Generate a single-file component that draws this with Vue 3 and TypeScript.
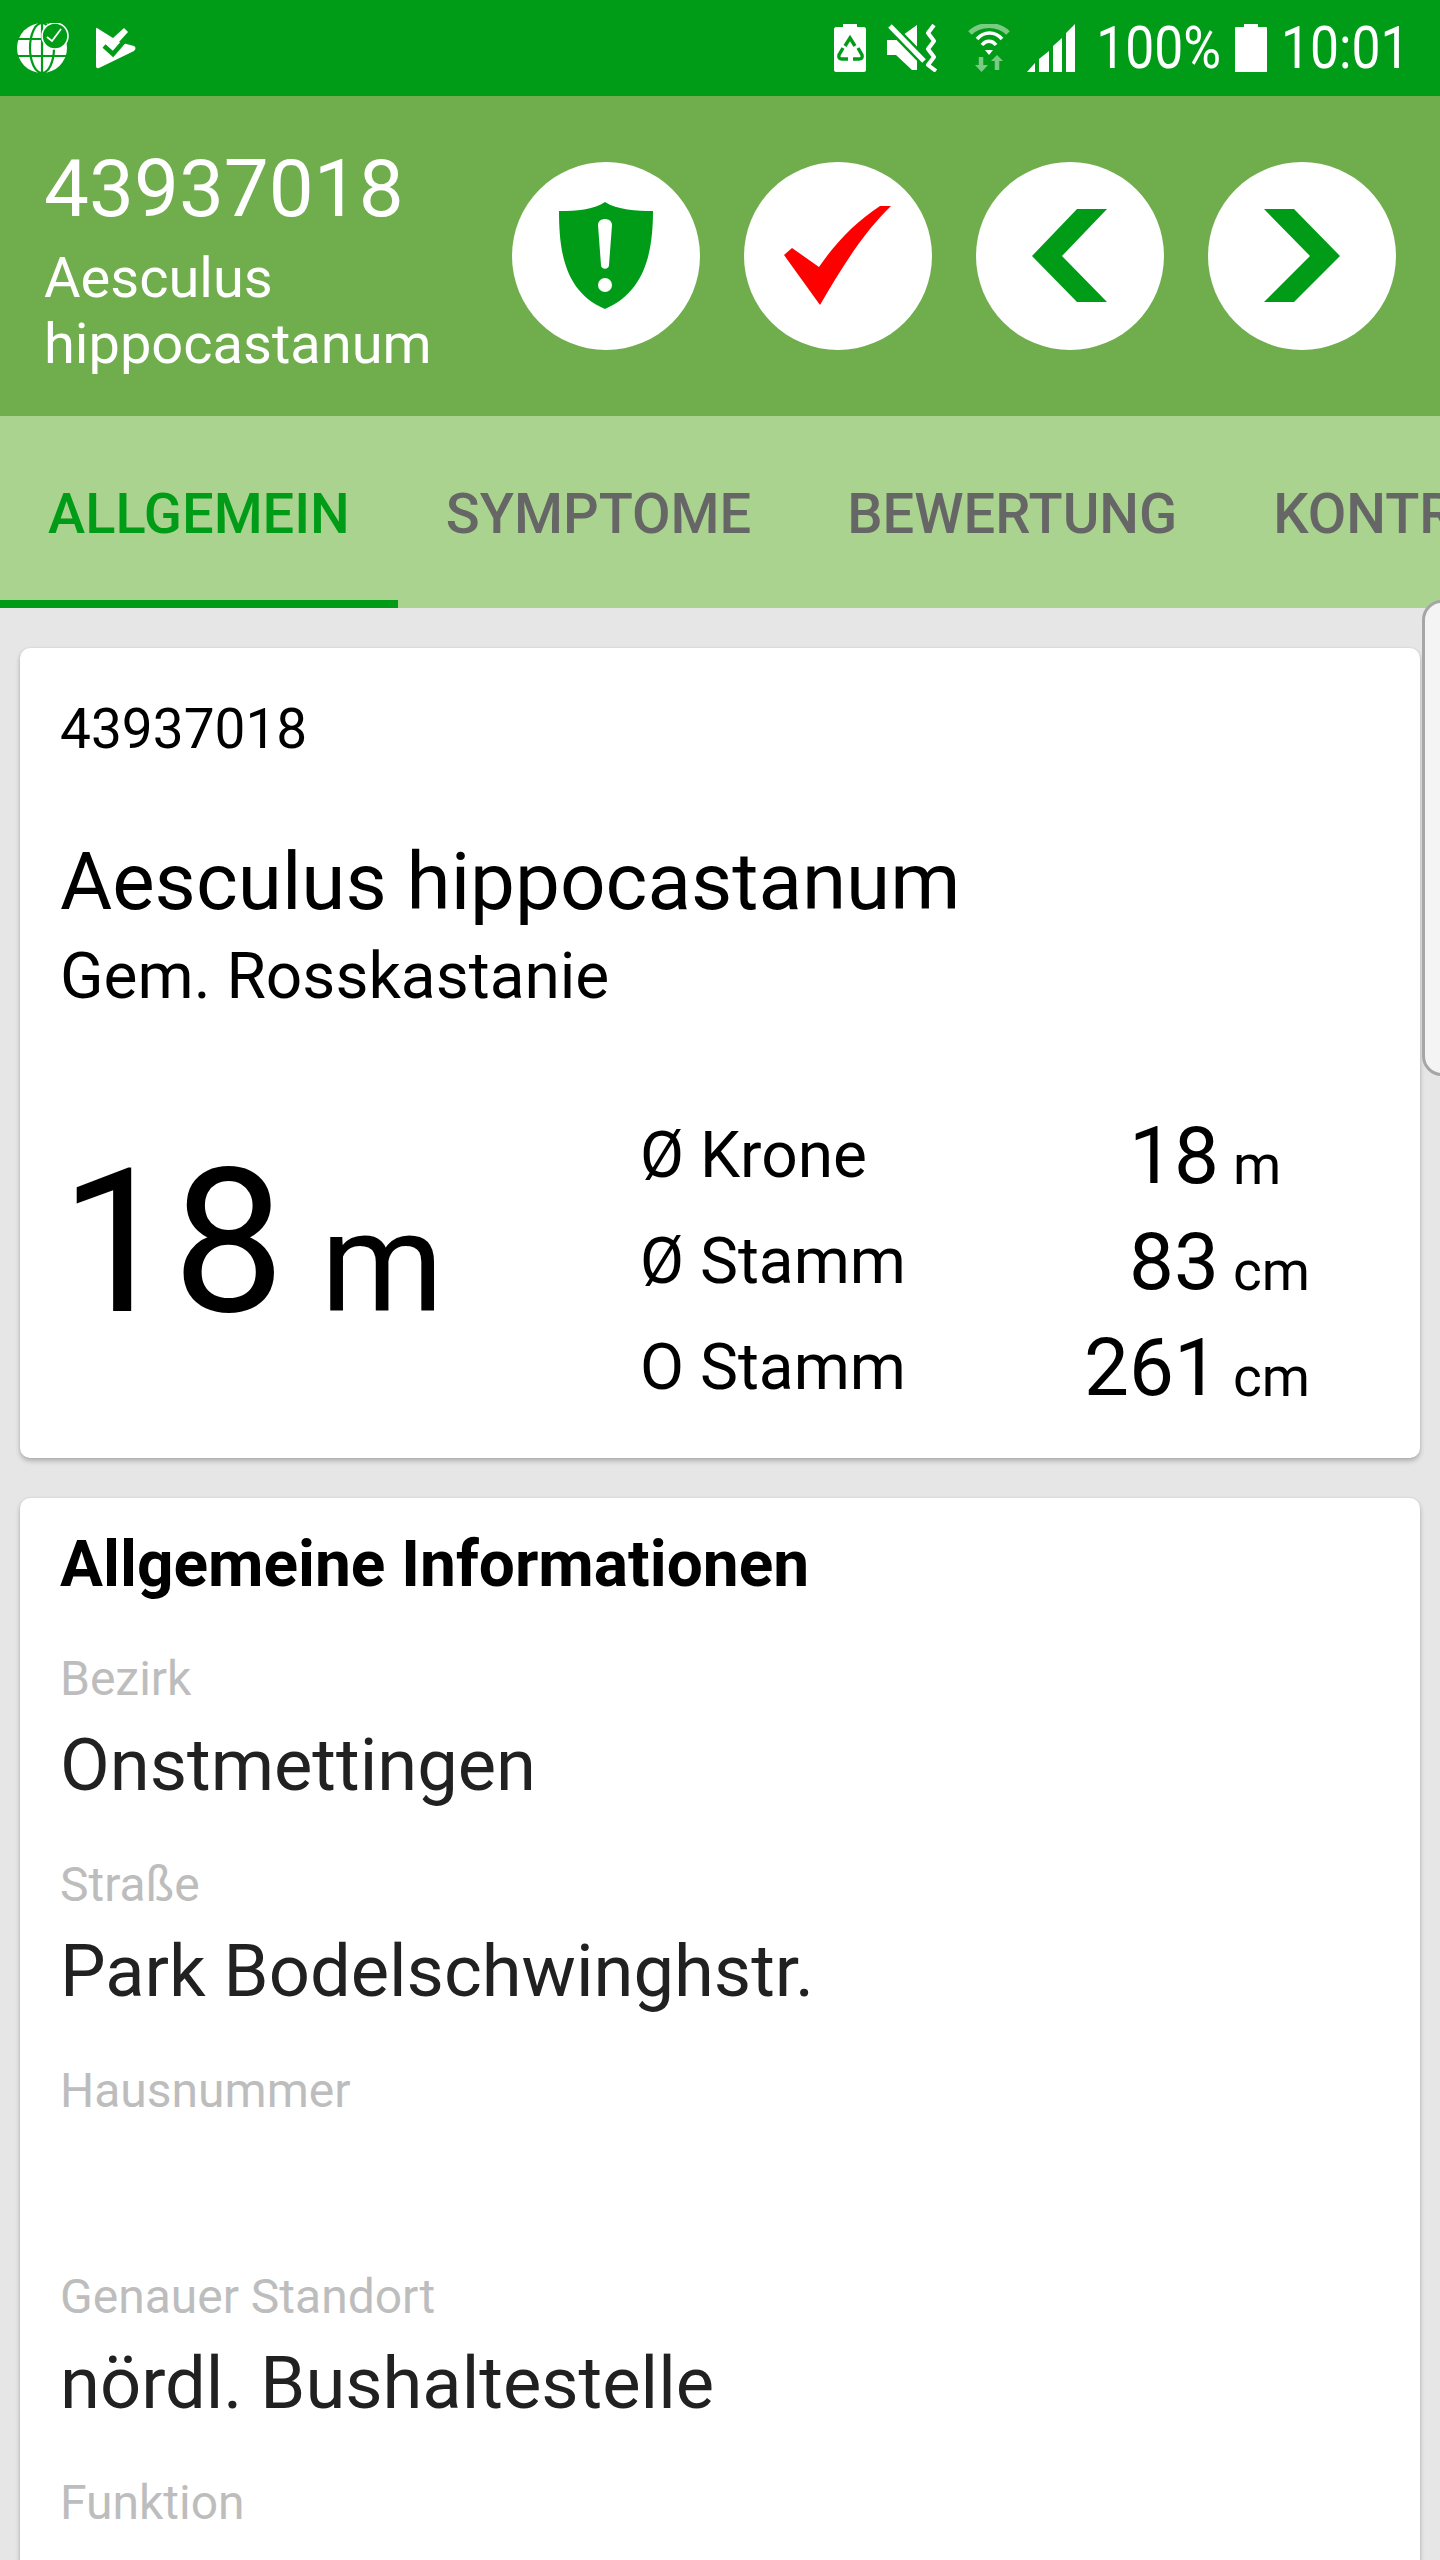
<template>
  <div class="screen">
    <div class="status">
      <svg class="s-globe" width="52" height="50" viewBox="0 0 52 50">
        <circle cx="25" cy="25" r="25" fill="#fff" />
        <g fill="none" stroke="#009c18" stroke-width="2.2">
          <ellipse cx="25" cy="25" rx="12" ry="25" />
          <path d="M25 0v50M0 16h50M0 33h50" />
        </g>
        <circle cx="38" cy="13" r="13" fill="#009c18" stroke="#fff" stroke-width="1.6" />
        <path d="M30 14l5 4 9-12" fill="none" stroke="#fff" stroke-width="1.8" />
      </svg>
      <svg class="s-flag" width="40" height="42" viewBox="0 0 40 42">
        <path d="M1 1L17 11L28 1L32 5L23 15L38 19Q41 21 38 24L3 41Q0 42 0 39V3Q0 0 1 1Z" fill="#fff" />
        <path d="M8 19L17 27L30 12" fill="none" stroke="#009c18" stroke-width="4.5" />
      </svg>
      <div class="status-spacer"></div>
      <svg class="s-bat" width="32" height="48" viewBox="0 0 32 48">
        <path d="M9 0h14v3h7c1 0 2 1 2 2v41c0 1-1 2-2 2H2c-1 0-2-1-2-2V5c0-1 1-2 2-2h7z" fill="#fff" />
        <g fill="none" stroke="#009c18" stroke-width="3.4">
          <path d="M11 22L16 14L21 22" />
          <path d="M9 24L5 31Q4 35 8 35H14" />
          <path d="M24 24L28 31Q29 35 25 35H19" />
        </g>
      </svg>
      <svg class="s-mute" width="52" height="48" viewBox="0 0 52 48">
        <path d="M0 16H9L30 1V46H25L9 31H0Z" fill="#fff" />
        <path d="M-2 -3L42 42" stroke="#009c18" stroke-width="10" />
        <path d="M3 2L37 37" stroke="#fff" stroke-width="5" />
        <path d="M47 1L41 9L47 17L41 25L47 33L41 41L49 47" fill="none" stroke="#fff" stroke-width="4" stroke-linejoin="round" />
      </svg>
      <svg class="s-wifi" width="42" height="48" viewBox="0 0 42 48">
        <path d="M2 9C12 -1 30 -1 40 9" fill="none" stroke="#7ccb85" stroke-width="5" />
        <path d="M9 15C16 7 27 7 34 15M14 21C18 16 24 16 28 21" fill="none" stroke="#fff" stroke-width="3.6" />
        <path d="M17 26H25L21 31Z" fill="#fff" />
        <path d="M13 33V43" stroke="#7ccb85" stroke-width="4.5" />
        <path d="M7 41H20L13.5 48Z" fill="#7ccb85" />
        <path d="M29 36V46" stroke="#7ccb85" stroke-width="4.5" />
        <path d="M23 37H35L29 31Z" fill="#7ccb85" />
      </svg>
      <svg class="s-signal" width="48" height="48" viewBox="0 0 48 48">
        <path d="M0 48L8 39V48ZM12 48V35L22 27V48ZM26 48V22L35 14V48ZM39 48V9L48 0V48Z" fill="#fff" />
      </svg>
      <div class="s-text s-pct"><span>100%</span></div>
      <svg class="s-level" width="32" height="48" viewBox="0 0 32 48">
        <path d="M9 0h14v3h8c1 0 1 1 1 1v44H0V4c0 0 0-1 1-1h8z" fill="#fff" />
      </svg>
      <div class="s-text s-time"><span>10:01</span></div>
    </div>

    <header class="head">
      <div class="head-title">
        <div class="head-num">{{ tree.id }}</div>
        <div class="head-name">Aesculus<br />hippocastanum</div>
      </div>
      <div class="head-btns">
        <button class="round">
          <svg width="188" height="188" viewBox="0 0 188 188">
            <path d="M93 40C105 48 125 49 141 49C141 90 133 130 93 147C53 130 47 90 47 49C65 49 81 48 93 40Z" fill="#009c18" />
            <path d="M86 63c0-8 14-8 14 0l-3 40c0 5-8 5-8 0z" fill="#fff" />
            <circle cx="93" cy="123" r="7" fill="#fff" />
          </svg>
        </button>
        <button class="round">
          <svg width="188" height="188" viewBox="0 0 188 188">
            <path d="M40 93L48 86L75 105C92 80 112 60 136 44H147C120 70 98 105 76 143Z" fill="#f00" />
          </svg>
        </button>
        <button class="round">
          <svg width="188" height="188" viewBox="0 0 188 188">
            <path d="M101 47H131L86 94L131 140H101L56 94Z" fill="#009c18" />
          </svg>
        </button>
        <button class="round">
          <svg width="188" height="188" viewBox="0 0 188 188">
            <path d="M56 47H86L132 94L86 140H56L102 94Z" fill="#009c18" />
          </svg>
        </button>
      </div>
    </header>

    <nav class="tabs">
      <div v-for="(t, i) in tabs" :key="t" class="tab" :class="{ active: i === 0 }">{{ t }}</div>
    </nav>

    <main class="content">
      <div class="edge"></div>
      <section class="card card-top">
        <div class="id">{{ tree.id }}</div>
        <div class="latin">Aesculus hippocastanum</div>
        <div class="german">Gem. Rosskastanie</div>
        <div class="measures">
          <div class="height">18<span class="height-unit">m</span></div>
          <div class="table">
            <template v-for="r in rows" :key="r.label">
              <div class="t-label">{{ r.label }}</div>
              <div class="t-val">{{ r.value }}</div>
              <div class="t-unit">{{ r.unit }}</div>
            </template>
          </div>
        </div>
      </section>

      <section class="card card-info">
        <h2>Allgemeine Informationen</h2>
        <div v-for="f in fields" :key="f.label" class="field">
          <div class="f-label">{{ f.label }}</div>
          <div class="f-value">{{ f.value }}</div>
        </div>
      </section>
    </main>
  </div>
</template>

<script setup lang="ts">
const tree = { id: '43937018' }

const tabs: string[] = ['ALLGEMEIN', 'SYMPTOME', 'BEWERTUNG', 'KONTROLLE']

const rows = [
  { label: 'Ø Krone', value: '18', unit: 'm' },
  { label: 'Ø Stamm', value: '83', unit: 'cm' },
  { label: 'O Stamm', value: '261', unit: 'cm' },
]

const fields = [
  { label: 'Bezirk', value: 'Onstmettingen' },
  { label: 'Straße', value: 'Park Bodelschwinghstr.' },
  { label: 'Hausnummer', value: '' },
  { label: 'Genauer Standort', value: 'nördl. Bushaltestelle' },
  { label: 'Funktion', value: '' },
]
</script>

<style>
html,
body {
  margin: 0;
  background: #e6e6e6;
}
</style>

<style scoped>
.screen {
  width: 1440px;
  height: 2560px;
  overflow: hidden;
  font-family: Roboto, "Liberation Sans", sans-serif;
  background: #e6e6e6;
  display: flex;
  flex-direction: column;
}

.status {
  height: 96px;
  flex: none;
  background: #009c18;
  display: flex;
  align-items: center;
  box-sizing: border-box;
  padding-right: 31px;
}
.status svg {
  flex: none;
  display: block;
}
.s-globe {
  margin-left: 17px;
}
.s-flag {
  margin-left: 27px;
}
.status-spacer {
  flex: 1;
}
.s-mute {
  margin-left: 21px;
}
.s-wifi {
  margin-left: 29px;
}
.s-signal {
  margin-left: 17px;
}
.s-level {
  margin-left: 14px;
}
.s-text {
  color: #fff;
  font-size: 60px;
  line-height: 60px;
  display: flex;
  justify-content: flex-end;
}
.s-text span {
  transform: scaleX(0.86);
  transform-origin: right center;
  white-space: nowrap;
}
.s-pct {
  width: 123px;
  margin-left: 23px;
}
.s-time {
  width: 122px;
  margin-left: 20px;
}

.head {
  height: 320px;
  flex: none;
  background: #70ad4c;
  display: flex;
  align-items: center;
  justify-content: space-between;
  padding: 0 44px;
  color: #fff;
}
.head-title {
  padding-top: 4px;
}
.head-num {
  font-size: 80px;
  line-height: 100px;
  margin-bottom: 6px;
}
.head-name {
  font-size: 56px;
  line-height: 66px;
}
.head-btns {
  display: flex;
  gap: 44px;
}
.round {
  width: 188px;
  height: 188px;
  border: none;
  padding: 0;
  border-radius: 50%;
  background: #fff;
}
.round svg {
  display: block;
}

.tabs {
  height: 192px;
  flex: none;
  background: #a9d38f;
  display: flex;
  overflow: hidden;
}
.tab {
  flex: none;
  box-sizing: border-box;
  height: 192px;
  padding: 0 48px;
  line-height: 196px;
  font-size: 56px;
  font-weight: 500;
  color: #666;
}
.tab.active {
  color: #009c18;
  border-bottom: 8px solid #009c18;
}

.content {
  flex: 1;
  position: relative;
  padding: 40px 20px 0;
}
.edge {
  position: absolute;
  left: 1422px;
  top: -8px;
  width: 40px;
  height: 476px;
  box-sizing: border-box;
  background: #f4f4f4;
  border: 3px solid #a6a6a6;
  border-radius: 20px;
}
.card {
  background: #fff;
  border-radius: 10px;
  box-shadow: 0 3px 5px rgba(0, 0, 0, 0.24), 0 0 2px rgba(0, 0, 0, 0.1);
  padding: 0 40px;
  width: 1400px;
  box-sizing: border-box;
  color: #000;
}
.card-top {
  height: 810px;
  padding-top: 46px;
}
.id {
  font-size: 55px;
  line-height: 70px;
}
.latin {
  font-size: 80px;
  line-height: 100px;
  margin-top: 68px;
}
.german {
  font-size: 64px;
  line-height: 76px;
  margin-top: 7px;
}
.measures {
  display: flex;
  align-items: flex-start;
  margin-top: 59px;
}
.height {
  width: 580px;
  margin-top: 19px;
  font-size: 200px;
  line-height: 300px;
}
.height-unit {
  font-size: 140px;
  margin-left: 36px;
}
.table {
  display: grid;
  grid-template-columns: 384px 195px auto;
  grid-auto-rows: 106px;
  align-items: start;
  margin-top: 28px;
}
.t-label {
  font-size: 64px;
  line-height: 107px;
}
.t-val {
  font-size: 80px;
  line-height: 108px;
  text-align: right;
}
.t-unit {
  font-size: 55px;
  line-height: 126px;
  padding-left: 14px;
}

.card-info {
  margin-top: 40px;
  padding-top: 30px;
  height: 1200px;
}
h2 {
  margin: 0;
  font-size: 64px;
  line-height: 74px;
  font-weight: 700;
}
.field {
  height: 206px;
  box-sizing: border-box;
}
.f-label {
  font-size: 48px;
  line-height: 56px;
  color: #bdbdbd;
  padding-top: 49px;
}
.f-value {
  font-size: 72.3px;
  line-height: 86px;
  color: #212121;
  margin-top: 16px;
}
</style>
